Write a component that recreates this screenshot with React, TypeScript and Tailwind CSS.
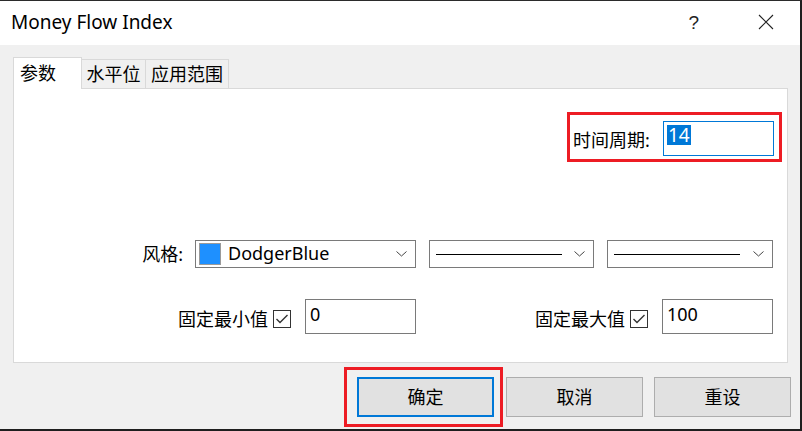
import React from "react";

const ui = "font-['Noto_Sans','Noto_Sans_CJK_SC',sans-serif]";

function Chevron() {
  return (
    <svg width="11" height="6" viewBox="0 0 11 6" className="shrink-0">
      <polyline points="0.5,0.5 5.5,5 10.5,0.5" fill="none" stroke="#444" strokeWidth="1" />
    </svg>
  );
}

function Check() {
  return (
    <div className="w-[18px] h-[18px] border border-[#333] bg-white flex items-center justify-center mt-[5px]">
      <svg width="14" height="12" viewBox="0 0 14 12">
        <polyline points="1.5,6 5,9.5 12.5,2" fill="none" stroke="#333" strokeWidth="1.4" />
      </svg>
    </div>
  );
}

function Field({ value }: { value: string }) {
  return (
    <div className="w-[111px] h-[35px] border border-[#7a7a7a] bg-white pl-[4px] pt-[2px] text-[18px] leading-[24px] text-black">
      {value}
    </div>
  );
}

function LineSelect({ width, line }: { width: string; line: string }) {
  return (
    <div className={`${width} h-[28px] border border-[#7a7a7a] bg-white flex items-center pl-[6px] pr-[8px]`}>
      <div className={`${line} h-px bg-black`} />
      <div className="flex-1" />
      <Chevron />
    </div>
  );
}

export default function App() {
  return (
    <div className={`${ui} w-[802px] h-[431px] bg-[#f0f0f0] border-t border-t-[#2b2b2b] border-r-2 border-r-[#1e1e1e] border-b-2 border-b-[#1e1e1e] flex flex-col text-black overflow-hidden`}>
      {/* title bar */}
      <div className="h-[44px] bg-white flex items-center shrink-0">
        <span className="pl-[11px] text-[19px] leading-none pb-[2px]">Money Flow Index</span>
        <div className="flex-1" />
        <span className="text-[19px] leading-none text-[#222] pb-[2px] mr-[59px] font-['Liberation_Sans',sans-serif] font-light">?</span>
        <svg width="16" height="16" viewBox="0 0 16 16" className="mr-[26px] mb-[2px]">
          <path d="M1 1 L15 15 M15 1 L1 15" stroke="#222" strokeWidth="1.1" />
        </svg>
      </div>

      {/* tabs */}
      <div className="pl-[13px] pt-[12px] flex items-end h-[43px] shrink-0">
        <div className="relative z-10 -mb-px w-[69px] h-[32px] bg-white border-l border-t border-r border-[#d9d9d9] pl-[6px] flex items-center text-[18px]">
          参数
        </div>
        <div className="w-[64px] h-[29px] border-t border-r border-[#d9d9d9] flex items-center justify-center text-[18px] pt-px">
          水平位
        </div>
        <div className="w-[83px] h-[29px] border-t border-r border-[#d9d9d9] flex items-center justify-center text-[18px] pt-px">
          应用范围
        </div>
      </div>

      {/* panel */}
      <div className="ml-[13px] w-[775px] h-[275px] bg-white border border-[#d9d9d9] flex flex-col shrink-0">
        <div className="flex justify-end pr-[5px] pt-[23px]">
          <div className="w-[215px] border-[3px] border-[#ed1c24] h-[50px] flex items-start pl-[3px] pr-[5px] pt-[6px]">
            <span className="text-[18px] leading-[35px] mt-[2px]">时间周期:</span>
            <div className="flex-1" />
            <div className="w-[111px] h-[35px] border border-[#0078d7] bg-white pl-[3px] pt-[2px]">
              <span className="bg-[#0078d7] text-white text-[19px] leading-[20px] inline-block px-px">14</span>
            </div>
          </div>
        </div>

        <div className="flex justify-end items-center pr-[14px] mt-[78px]">
          <span className="text-[18px] mr-[12px]">风格:</span>
          <div className="w-[221px] h-[28px] border border-[#7a7a7a] bg-white flex items-center pl-[3px] pr-[8px]">
            <div className="w-[22px] h-[22px] bg-[#1e90ff] border border-[#9a9a9a]" />
            <span className="ml-[7px] text-[18px] leading-none pb-[2px]">DodgerBlue</span>
            <div className="flex-1" />
            <Chevron />
          </div>
          <div className="ml-[13px]">
            <LineSelect width="w-[165px]" line="w-[126px]" />
          </div>
          <div className="ml-[13px]">
            <LineSelect width="w-[166px]" line="w-[126px]" />
          </div>
        </div>

        <div className="flex justify-end items-center pr-[14px] mt-[31px]">
          <div className="flex items-center">
            <span className="text-[18px] mt-[5px] mr-[5px]">固定最小值</span>
            <Check />
            <div className="ml-[14px]">
              <Field value="0" />
            </div>
          </div>
          <div className="w-[344px] ml-[13px] flex items-center justify-end">
            <span className="text-[18px] mt-[5px] mr-[5px]">固定最大值</span>
            <Check />
            <div className="ml-[14px]">
              <Field value="100" />
            </div>
          </div>
        </div>
      </div>

      {/* buttons */}
      <div className="flex justify-end items-start pr-[9px] mt-[4px]">
        <div className="border-[3px] border-[#ed1c24] pl-[10px] pr-[6px] py-[7px]">
          <button className="w-[137px] h-[40px] bg-[#e1e1e1] border-2 border-[#0078d7] text-[18px]">确定</button>
        </div>
        <button className="ml-[3px] mt-[10px] w-[137px] h-[40px] bg-[#e1e1e1] border border-[#adadad] text-[18px]">取消</button>
        <button className="ml-[11px] mt-[10px] w-[137px] h-[40px] bg-[#e1e1e1] border border-[#adadad] text-[18px]">重设</button>
      </div>
    </div>
  );
}
